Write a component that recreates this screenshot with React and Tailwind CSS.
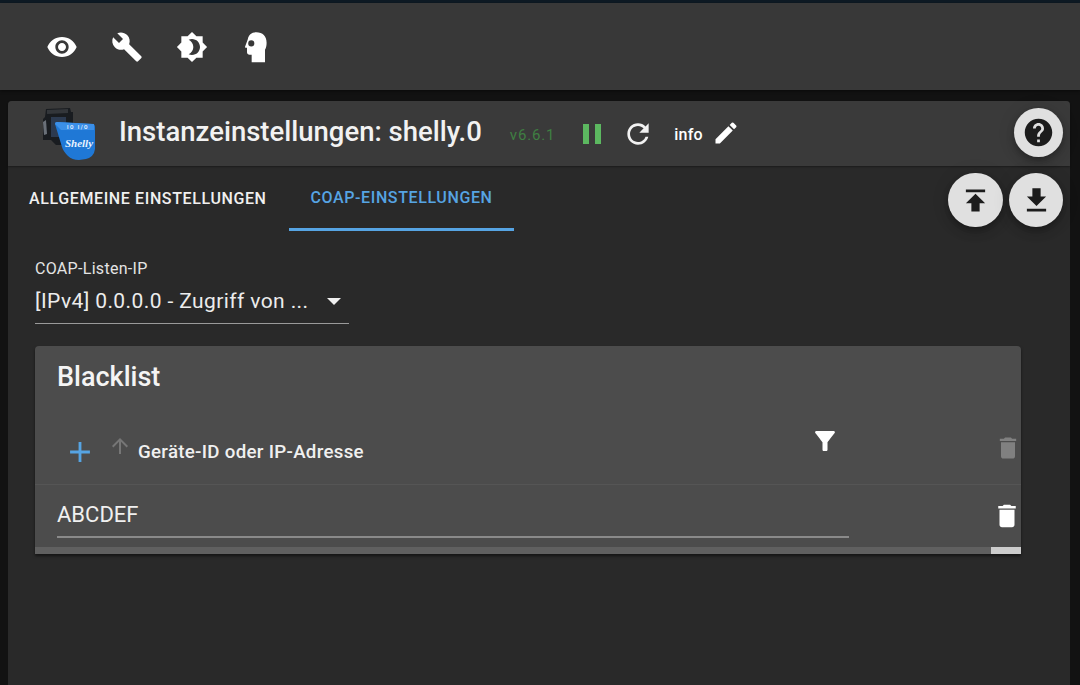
import React from "react";

const I = ({ d, className }) => (
  <svg viewBox="0 0 24 24" className={className} fill="currentColor">
    <path d={d} />
  </svg>
);

const P = {
  eye: "M12 4.5C7 4.5 2.73 7.61 1 12c1.73 4.39 6 7.5 11 7.5s9.27-3.11 11-7.5c-1.73-4.39-6-7.5-11-7.5zM12 17c-2.76 0-5-2.24-5-5s2.24-5 5-5 5 2.24 5 5-2.24 5-5 5zm0-8c-1.66 0-3 1.34-3 3s1.34 3 3 3 3-1.34 3-3-1.34-3-3-3z",
  build: "M22.7 19l-9.1-9.1c.9-2.3.4-5-1.5-6.9-2-2-5-2.4-7.4-1.3L9 6 6 9 1.6 4.7C.4 7.1.9 10.1 2.9 12.1c1.9 1.9 4.6 2.4 6.9 1.5l9.1 9.1c.4.4 1 .4 1.4 0l2.3-2.3c.5-.4.5-1.1.1-1.4z",
  bright: "M20 8.69V4h-4.69L12 .69 8.69 4H4v4.69L.69 12 4 15.31V20h4.69L12 23.31 15.31 20H20v-4.69L23.31 12 20 8.69zM12 18c-.89 0-1.74-.2-2.5-.55C11.56 16.5 13 14.42 13 12s-1.44-4.5-3.5-5.45C10.26 6.2 11.11 6 12 6c3.31 0 6 2.69 6 6s-2.69 6-6 6z",
  head: "M13 1C9.3 1 7.2 3.2 6.6 6.2L4.6 11.6c-.2.5.1 1 .6 1H6v3.4c0 1.1.8 1.9 1.9 1.9h1.6V23.5h10v-9.5c.9-1.4 1.2-3.2 1.2-5.2C20.7 4 17.7 1 13 1zM9.2 7a2.3 2.3 0 1 1 0 4.6 2.3 2.3 0 0 1 0-4.6z",
  refresh: "M17.65 6.35C16.2 4.9 14.21 4 12 4c-4.42 0-7.99 3.58-7.99 8s3.57 8 7.99 8c3.73 0 6.84-2.55 7.73-6h-2.08c-.82 2.33-3.04 4-5.65 4-3.31 0-6-2.69-6-6s2.69-6 6-6c1.66 0 3.14.69 4.22 1.78L13 11h7V4l-2.35 2.35z",
  edit: "M3 17.25V21h3.75L17.81 9.94l-3.75-3.75L3 17.25zM20.71 7.04c.39-.39.39-1.02 0-1.41l-2.34-2.34a.9959.9959 0 00-1.41 0l-1.83 1.83 3.75 3.75 1.83-1.83z",
  help: "M12 2C6.48 2 2 6.48 2 12s4.48 10 10 10 10-4.48 10-10S17.52 2 12 2zm1 17h-2v-2h2v2zm2.07-7.75l-.9.92C13.45 12.9 13 13.5 13 15h-2v-.5c0-1.1.45-2.1 1.17-2.83l1.24-1.26c.37-.36.59-.86.59-1.41 0-1.1-.9-2-2-2s-2 .9-2 2H8c0-2.21 1.79-4 4-4s4 1.79 4 4c0 .88-.36 1.68-.93 2.25z",
  publish: "M5 4v2h14V4H5zm0 10h4v6h6v-6h4l-7-7-7 7z",
  download: "M19 9h-4V3H9v6H5l7 7 7-7zM5 18v2h14v-2H5z",
  filter: "M4.25 5.61C6.27 8.2 10 13 10 13v6c0 .55.45 1 1 1h2c.55 0 1-.45 1-1v-6s3.72-4.8 5.74-7.39c.51-.66.04-1.61-.79-1.61H5.04c-.83 0-1.3.95-.79 1.61z",
  del: "M6 19c0 1.1.9 2 2 2h8c1.1 0 2-.9 2-2V7H6v12zM19 4h-3.5l-1-1h-5l-1 1H5v2h14V4z",
  up: "M4 12l1.41 1.41L11 7.83V20h2V7.83l5.58 5.59L20 12l-8-8-8 8z",
  add: "M19 13h-6v6h-2v-6H5v-2h6V5h2v6h6v2z",
};

const Logo = () => (
  <svg viewBox="0 0 54 54" className="w-[54px] h-[54px] shrink-0 ml-[3px]">
    <path d="M4 2 L28 1 L29 5 L31 5 L31 38 L14 38 L9 33 L1 33 L1 12 L3 10 Z" fill="#191c20" />
    <path d="M5 3 L26 2 L26 6 L5 7 Z" fill="#33363a" />
    <rect x="9" y="10" width="15" height="20" fill="#2c3a50" />
    <path d="M1 15 L4 13 L5 27 L2 28 Z" fill="#6a7078" />
    <path d="M13 17 Q13 15 15 15 L50 17 Q53 17 53 20 L53 42 Q52 50 44 52 L37 53 Q30 53 26 49 Q21 44 20 40 Z" fill="#1f78d6" />
    <path d="M13 17 Q13 15 15 15 L52 17 L52 23 L19 23 Z" fill="#3b8fe8" />
    <text x="36" y="21.5" textAnchor="middle" fontSize="5" fontWeight="700" fill="#e8f2ff" letterSpacing="1.5" fontFamily="Roboto, sans-serif">IO I/O</text>
    <text x="37" y="40" textAnchor="middle" fontSize="11" fontStyle="italic" fontWeight="700" fill="#eaf3ff" fontFamily="'Liberation Serif', serif">Shelly</text>
  </svg>
);

const Fab = ({ d, w, h, icon }) => (
  <div className={`${w} ${h} rounded-full bg-[#e0e0e0] text-[#1c1c1c] flex items-center justify-center shrink-0 shadow-[0_3px_5px_-1px_rgba(0,0,0,0.2),0_6px_10px_0_rgba(0,0,0,0.14),0_1px_18px_0_rgba(0,0,0,0.12)]`}>
    <I d={d} className={icon} />
  </div>
);

export default function App() {
  return (
    <div className="w-[1080px] h-[685px] overflow-hidden flex flex-col bg-[#121212] text-white font-['Roboto',sans-serif]">
      <div className="h-[3px] bg-[#0e1a24] shrink-0" />
      <div className="h-[87px] shrink-0 bg-[#383838] flex items-center pl-[46px] gap-[33px] shadow-[0_1px_3px_rgba(0,0,0,0.5)]">
        <I d={P.eye} className="w-[32px] h-[32px]" />
        <I d={P.build} className="w-[32px] h-[32px]" />
        <I d={P.bright} className="w-[32px] h-[32px]" />
        <I d={P.head} className="w-[32px] h-[32px] ml-[-2px]" />
      </div>
      <div className="flex-1 flex flex-col mt-[11px] ml-[8px] mr-[10px] rounded-t bg-[#292929] min-h-0">
        <div className="h-[65px] shrink-0 rounded-t bg-[#3a3a3a] flex items-center pl-[31px] pr-[7px] shadow-[0_1px_2px_rgba(0,0,0,0.35)]">
          <Logo />
          <span className="ml-[23px] text-[27.5px] font-medium leading-none text-[#f2f2f2] mt-[-4px]">Instanzeinstellungen: shelly.0</span>
          <span className="ml-[28px] text-[15px] tracking-[0.85px] text-[#3f7f42] mt-[4px]">v6.6.1</span>
          <span className="ml-[28px] flex gap-[6px] mt-[1px]">
            <span className="w-[6px] h-[20px] bg-[#5cb860]" />
            <span className="w-[6px] h-[20px] bg-[#5cb860]" />
          </span>
          <I d={P.refresh} className="ml-[21px] w-[32px] h-[32px] text-[#f2f2f2] mt-[1px]" />
          <span className="ml-[20px] text-[16px] font-medium mt-[3px] tracking-[0.2px]">info</span>
          <I d={P.edit} className="ml-[9px] w-[28px] h-[28px] mt-[-1px]" />
          <div className="ml-auto mt-[-3px]">
            <Fab d={P.help} w="w-[49px]" h="h-[49px]" icon="w-[33px] h-[33px]" />
          </div>
        </div>
        <div className="flex h-[65px] shrink-0 pr-[7px]">
          <div className="h-full pl-[21px] w-[281px] flex items-center text-[16px] font-medium tracking-[0.62px] text-[#f0f0f0]">ALLGEMEINE EINSTELLUNGEN</div>
          <div className="h-full w-[225px] flex items-center justify-center text-[16px] font-medium tracking-[0.62px] text-[#56a4e3] border-b-[3px] border-[#56a4e3] pt-[2px]">COAP-EINSTELLUNGEN</div>
          <div className="ml-auto flex gap-[6px] h-[54px] mt-[7px]">
            <Fab d={P.publish} w="w-[55px]" h="h-[54px]" icon="w-[33px] h-[33px]" />
            <Fab d={P.download} w="w-[54px]" h="h-[54px]" icon="w-[33px] h-[33px]" />
          </div>
        </div>
        <div className="pl-[27px] pt-[29px] w-[341px] shrink-0">
          <div className="text-[16px] leading-[17px] tracking-[0.3px] text-[#e4e4e4]">COAP-Listen-IP</div>
          <div className="mt-[5px] h-[42px] border-b border-[#9a9a9a] flex items-center text-[21px] tracking-[0.4px] text-[#ececec] pb-[2px]">
            <span>[IPv4] 0.0.0.0 - Zugriff von ...</span>
            <span className="ml-auto mr-[8px] w-0 h-0 border-x-[7px] border-x-transparent border-t-[7px] border-t-[#f0f0f0]" />
          </div>
        </div>
        <div className="ml-[27px] w-[986px] h-[208px] mt-[22px] rounded-t bg-[#4c4c4c] flex flex-col shadow-[0_2px_3px_rgba(0,0,0,0.5)] shrink-0">
          <div className="h-[63px] pl-[22px] flex items-center text-[27px] font-medium text-[#f4f4f4] shrink-0">Blacklist</div>
          <div className="h-[76px] flex pl-[28px] border-b border-[#555555] shrink-0">
            <I d={P.add} className="w-[34px] h-[34px] mt-[26px] text-[#56a4e3] shrink-0" />
            <I d={P.up} className="ml-[11px] w-[24px] h-[24px] mt-[25px] text-[#767676] shrink-0" />
            <span className="ml-[6px] mt-[33px] text-[18.7px] font-medium leading-[20px] tracking-[0.3px] text-[#f0f0f0] w-[672px] shrink-0">Geräte-ID oder IP-Adresse</span>
            <I d={P.filter} className="mt-[17px] w-[30px] h-[30px] shrink-0" />
            <I d={P.del} className="ml-[154px] mt-[25px] w-[28px] h-[28px] text-[#808080] shrink-0" />
          </div>
          <div className="flex-1 flex pl-[22px] min-h-0">
            <div className="w-[792px] h-[53px] border-b-2 border-[#8a8a8a] flex items-center text-[22px] text-[#f0f0f0] pt-[8px] shrink-0">ABCDEF</div>
            <I d={P.del} className="ml-[143px] mt-[16px] w-[30px] h-[30px] shrink-0" />
          </div>
          <div className="h-[7px] flex shrink-0 mt-auto">
            <div className="flex-1 bg-[#606060]" />
            <div className="w-[30px] bg-[#cccccc]" />
          </div>
        </div>
      </div>
    </div>
  );
}
